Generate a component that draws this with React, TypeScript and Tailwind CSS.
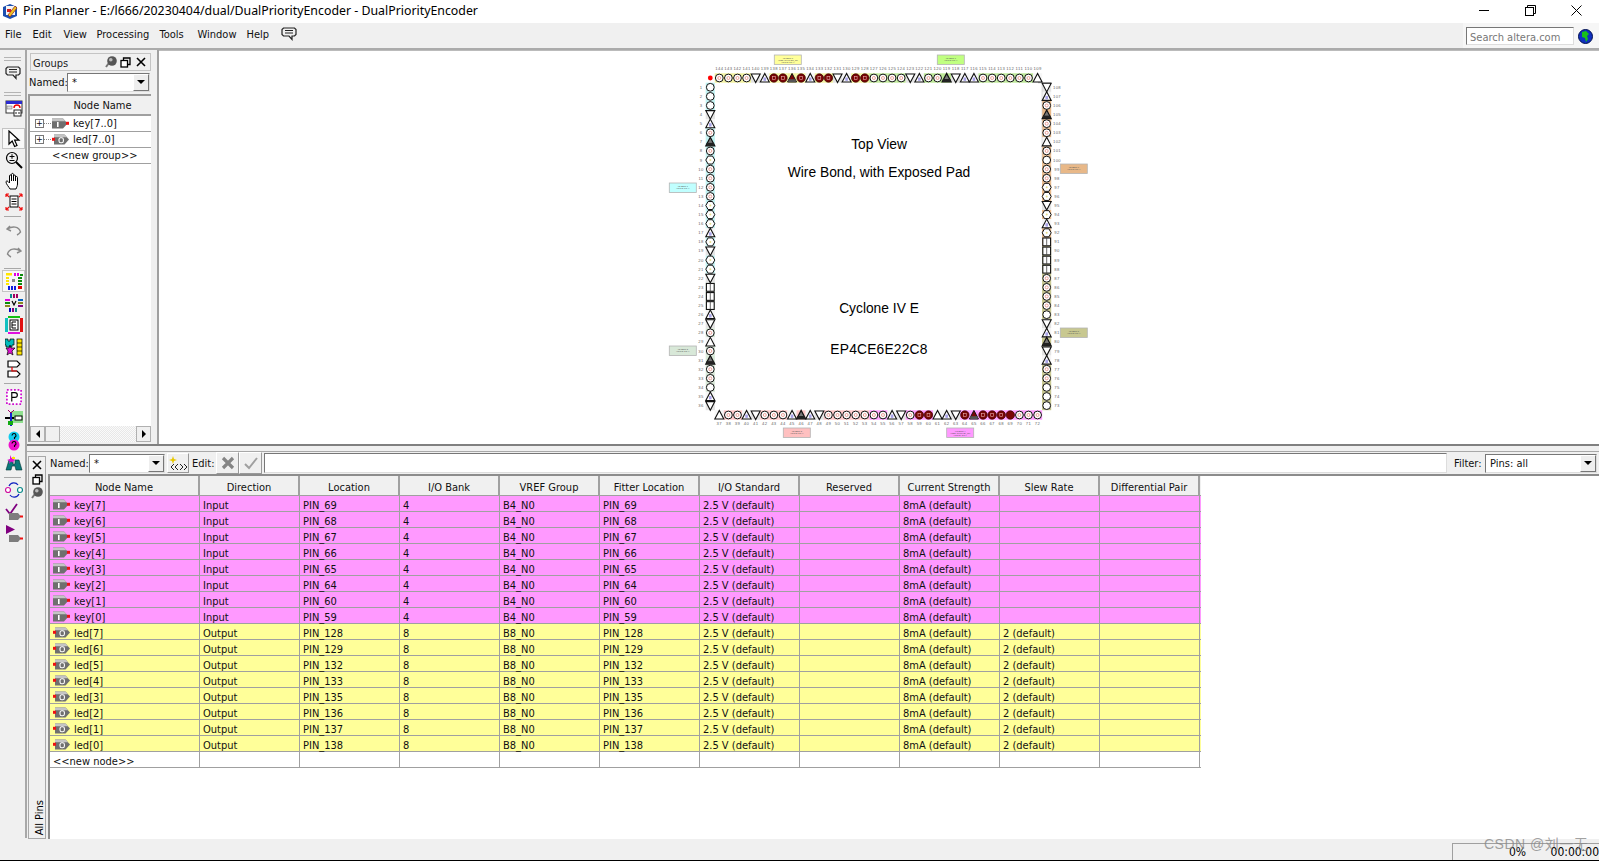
import React from "react";

const uiFont = "font-['DejaVu_Sans_Condensed','DejaVu_Sans',sans-serif] [font-stretch:condensed]";

type Kind = "o" | "c" | "h" | "V" | "A" | "W" | "B" | "d" | "D" | "S" | "e";

const topPins: Kind[] = ["c","c","c","c","V","A","d","d","D","d","A","d","d","V","A","d","d","c","c","c","c","V","A","c","c","B","V","A","A","c","c","c","c","c","c","W"];
const leftPins: Kind[] = ["o","o","o","V","A","c","B","c","h","c","c","c","c","h","h","h","A","h","V","h","h","V","S","S","S","A","V","c","W","c","B","c","c","o","A","V"];
const bottomPins: Kind[] = ["W","c","c","A","V","c","c","c","A","B","A","V","c","c","c","c","c","c","c","A","V","c","d","d","W","A","V","d","D","d","d","d","e","c","c","c"];
const rightPins: Kind[] = ["V","A","c","B","c","c","W","c","o","c","c","h","h","V","h","A","h","S","S","S","S","c","c","c","c","o","V","A","B","V","A","c","c","o","o","o"];

function Pin({ kind, x, y }: { kind: Kind; x: number; y: number }) {
  const s = "#111";
  const up = `${x - 4.5},${y + 4} ${x + 4.5},${y + 4} ${x},${y - 4.6}`;
  const down = `${x - 4.5},${y - 4} ${x + 4.5},${y - 4} ${x},${y + 4.6}`;
  switch (kind) {
    case "o":
      return <circle cx={x} cy={y} r={3.9} fill="#fff" stroke={s} strokeWidth={1} />;
    case "c":
      return (
        <g>
          <circle cx={x} cy={y} r={3.9} fill="#fff" stroke={s} strokeWidth={1} />
          <circle cx={x} cy={y} r={1.5} fill="#fff" stroke="#e58a80" strokeWidth={0.8} />
        </g>
      );
    case "h":
      return (
        <g>
          <polygon points={`${x - 4.5},${y} ${x - 2.2},${y - 4} ${x + 2.2},${y - 4} ${x + 4.5},${y} ${x + 2.2},${y + 4} ${x - 2.2},${y + 4}`} fill="#fff" stroke={s} strokeWidth={1} />
          <circle cx={x} cy={y} r={1} fill="#e6dd88" />
        </g>
      );
    case "V":
      return <polygon points={down} fill="#fff" stroke={s} strokeWidth={1.1} />;
    case "A":
      return (
        <g>
          <polygon points={up} fill="#fff" stroke={s} strokeWidth={1.1} />
          <rect x={x - 1.3} y={y - 0.5} width={2.6} height={3.4} fill="#a9a4e8" />
        </g>
      );
    case "W":
      return <polygon points={up} fill="#fff" stroke={s} strokeWidth={1.1} />;
    case "B":
      return (
        <g>
          <polygon points={up} fill="#777" stroke={s} strokeWidth={1.2} />
          <rect x={x - 3.8} y={y + 1} width={7.6} height={3} fill="#222" />
        </g>
      );
    case "d":
      return (
        <g>
          <circle cx={x} cy={y} r={4.2} fill="#7a0505" stroke="#300" strokeWidth={0.7} />
          <rect x={x - 1.4} y={y - 1.4} width={2.8} height={2.8} fill="#7a0505" stroke="#e8b0b0" strokeWidth={0.6} />
        </g>
      );
    case "D":
      return (
        <g>
          <polygon points={up} fill="#7a0505" stroke={s} strokeWidth={1} />
          <rect x={x - 3.8} y={y + 1.2} width={7.6} height={2.8} fill="#555" />
        </g>
      );
    case "S":
      return (
        <g>
          <rect x={x - 3.9} y={y - 3.9} width={7.8} height={7.8} fill="#fff" stroke={s} strokeWidth={1.1} />
          <line x1={x} y1={y - 3.9} x2={x} y2={y + 3.9} stroke="#444" strokeWidth={0.8} />
        </g>
      );
    default:
      return <circle cx={x} cy={y} r={4.2} fill="#7a0505" stroke="#300" strokeWidth={0.7} />;
  }
}

const STEP = 9.094;

function stripColor(kind: Kind, bank: string) {
  if (kind === "V") return "#e4e4e4";
  if (kind === "A" || kind === "W") return "#f6f6f6";
  return bank;
}

function BankLabel({ x, y, fill, lines }: { x: number; y: number; fill: string; lines: string[] }) {
  return (
    <g>
      <rect x={x} y={y} width={27} height={9.5} fill={fill} stroke="#b4b4b4" strokeWidth={0.8} />
      {lines.map((l, i) => (
        <text key={i} x={x + 13.5} y={y + 3.6 + i * 2.4} fontSize={2.2} fill="#555" textAnchor="middle" fontFamily="Liberation Sans, sans-serif">
          {l}
        </text>
      ))}
    </g>
  );
}

function ChipView() {
  const numStyle = { fontSize: 4.2, fill: "#666", letterSpacing: 0.4, fontFamily: "Liberation Sans, sans-serif" };
  return (
    <svg className="w-[440px] h-[394px] shrink-0" viewBox="659 51 440 394">
      {topPins.map((k, i) => {
        const x = 719.3 + i * STEP;
        return <rect key={i} x={x - 4.6} y={73.3} width={9.2} height={9.4} fill={stripColor(k, i < 17 ? "#f3f3a0" : "#bce896")} />;
      })}
      {bottomPins.map((k, i) => {
        const x = 719.3 + i * STEP;
        return <rect key={i} x={x - 4.6} y={410.3} width={9.2} height={9.4} fill={stripColor(k, i < 17 ? "#ffc8c8" : "#ff99ff")} />;
      })}
      {leftPins.map((k, i) => {
        const y = 87.3 + i * STEP;
        return <rect key={i} x={705.7} y={y - 4.6} width={9.2} height={9.2} fill={stripColor(k, i < 22 ? "#c0f2f2" : "#d8e8d8")} />;
      })}
      {rightPins.map((k, i) => {
        const y = 87.3 + i * STEP;
        return <rect key={i} x={1042} y={y - 4.6} width={9.2} height={9.2} fill={stripColor(k, i < 18 ? "#e8b888" : "#c8c890")} />;
      })}
      <line x1={1038} y1={82.7} x2={1051} y2={82.7} stroke="#999" strokeWidth={0.8} />
      <line x1={1042} y1={83} x2={1042} y2={160} stroke="#ccc" strokeWidth={0.6} />

      {topPins.map((k, i) => {
        const x = 719.3 + i * STEP;
        return (
          <g key={i}>
            <Pin kind={k} x={x} y={78} />
            <text x={x} y={70} textAnchor="middle" style={numStyle}>{144 - i}</text>
          </g>
        );
      })}
      {bottomPins.map((k, i) => {
        const x = 719.3 + i * STEP;
        return (
          <g key={i}>
            <Pin kind={k} x={x} y={415} />
            <text x={x} y={425} textAnchor="middle" style={numStyle}>{37 + i}</text>
          </g>
        );
      })}
      {leftPins.map((k, i) => {
        const y = 87.3 + i * STEP;
        return (
          <g key={i}>
            <Pin kind={k} x={710.3} y={y} />
            <text x={701} y={y + 1.5} textAnchor="middle" style={numStyle}>{1 + i}</text>
          </g>
        );
      })}
      {rightPins.map((k, i) => {
        const y = 87.3 + i * STEP;
        return (
          <g key={i}>
            <Pin kind={k} x={1046.7} y={y} />
            <text x={1057} y={y + 1.5} textAnchor="middle" style={numStyle}>{108 - i}</text>
          </g>
        );
      })}
      <circle cx={710.3} cy={78} r={2.4} fill="#f00" />

      <BankLabel x={774.3} y={55} fill="#ffff99" lines={["I/O Bank 8", "VREF Group B8_N0", "VCCIO: 2.5 V"]} />
      <BankLabel x={937.3} y={55} fill="#c0ff80" lines={["I/O Bank 7", "VCCIO: 2.5 V"]} />
      <BankLabel x={669.3} y={183} fill="#c0ffff" lines={["I/O Bank 1", "VCCIO: 2.5 V"]} />
      <BankLabel x={669.3} y={346} fill="#d8e8d8" lines={["I/O Bank 2", "VCCIO: 2.5 V"]} />
      <BankLabel x={783.3} y={428} fill="#ffc0c0" lines={["I/O Bank 3", "VCCIO: 2.5 V"]} />
      <BankLabel x={946.7} y={428} fill="#ff99ff" lines={["I/O Bank 4", "VREF Group B4_N0", "VCCIO: 2.5 V"]} />
      <BankLabel x={1060.3} y={164} fill="#e8b888" lines={["I/O Bank 6", "VCCIO: 2.5 V"]} />
      <BankLabel x={1060.3} y={328} fill="#c8c890" lines={["I/O Bank 5", "VCCIO: 2.5 V"]} />

      <g fontFamily="Liberation Sans, sans-serif" fontSize={13.8} fill="#000" textAnchor="middle">
        <text x={879} y={149}>Top View</text>
        <text x={879} y={177}>Wire Bond, with Exposed Pad</text>
        <text x={879} y={313}>Cyclone IV E</text>
        <text x={879} y={354} letterSpacing={0.2}>EP4CE6E22C8</text>
      </g>
    </svg>
  );
}

function Bubble() {
  return (
    <svg width="16" height="16" viewBox="0 0 16 16" fill="none" stroke="#222" strokeWidth="1.2">
      <path d="M2.5 2h11l1.5 1.5v5L13.5 10H11v3.5L8 10H2.5L1 8.5v-5z" />
      <path d="M4 4.5h8M4 7h8" />
    </svg>
  );
}

function InputTag() {
  return (
    <svg width="17" height="11" viewBox="0 0 17 11" className="shrink-0 mt-[-3px]">
      <path d="M0 0.500h11l4.500 5-4.500 5H0z" fill="#6f6f6f" />
      <path d="M0 0.500h11l2.500 2.800H0z" fill="#c4c4c4" />
      <rect x="5" y="4" width="1.600" height="5" fill="#fff" />
      <rect x="14" y="3.800" width="3" height="3" fill="#ee1111" />
    </svg>
  );
}

function OutputTag() {
  return (
    <svg width="17" height="11" viewBox="0 0 17 11" className="shrink-0 mt-[-3px]">
      <path d="M2 0.500h10.500l4.500 5-4.500 5H2z" fill="#6f6f6f" />
      <path d="M2 0.500h10.500l2.500 2.800H2z" fill="#c4c4c4" />
      <rect x="7" y="3.800" width="4.400" height="5" rx="1.800" fill="none" stroke="#fff" strokeWidth="1.100" />
      <rect x="0" y="3.800" width="3" height="3" fill="#ee1111" />
    </svg>
  );
}

function PinGlyph() {
  return (
    <svg width="12" height="12" viewBox="0 0 12 12">
      <path d="M3.500 7.500 1 11" stroke="#777" strokeWidth="2" />
      <circle cx="7" cy="5" r="4.800" fill="#555" />
      <circle cx="5.800" cy="3.800" r="1.800" fill="#bbb" />
    </svg>
  );
}

function RestoreGlyph() {
  return (
    <svg width="11" height="11" viewBox="0 0 11 11" fill="none" stroke="#000" strokeWidth="1.3">
      <rect x="1" y="3.5" width="6.5" height="6.5" fill="#fff" />
      <path d="M3.5 3.5V1H10v6.5H7.5" />
    </svg>
  );
}

function CloseGlyph() {
  return (
    <svg width="10" height="10" viewBox="0 0 10 10" stroke="#000" strokeWidth="1.6">
      <path d="M1 1l8 8M9 1l-8 8" />
    </svg>
  );
}

function Combo({ width, text }: { width: string; text: string }) {
  return (
    <div className={`${width} h-[19px] shrink-0 flex items-center bg-white border border-t-[#777] border-l-[#777] border-r-[#ddd] border-b-[#ddd]`}>
      <span className="flex-1 pl-[4px]">{text}</span>
      <div className="w-[16px] h-[17px] bg-[#eeeeee] border border-t-white border-l-white border-r-[#777] border-b-[#777] flex items-center justify-center">
        <div className="w-0 h-0 border-x-[4px] border-x-transparent border-t-[4px] border-t-black" />
      </div>
    </div>
  );
}

const toolIcons: Record<string, React.ReactNode> = {
  assign: (
    <svg width="18" height="18" viewBox="0 0 18 18">
      <rect x="1" y="2" width="16" height="12" fill="#fff" stroke="#333" />
      <rect x="1" y="2" width="16" height="3" fill="#2a2ad0" />
      <rect x="2" y="7" width="5" height="3" fill="#ddd" stroke="#666" strokeWidth="0.5" />
      <path d="M9 9a3 3 0 0 1 6 0" stroke="#e00" strokeWidth="1.4" fill="none" />
      <rect x="9" y="11" width="7" height="6" fill="#fff" stroke="#222" />
      <path d="M11 13v2M14 13v2" stroke="#222" />
    </svg>
  ),
  pointer: (
    <svg width="16" height="18" viewBox="0 0 16 18" fill="#fff" stroke="#000" strokeWidth="1.2">
      <path d="M3 1v13l3.2-3 2.4 5.5 2.4-1-2.4-5.3H13z" />
    </svg>
  ),
  zoom: (
    <svg width="18" height="18" viewBox="0 0 18 18" fill="none" stroke="#000" strokeWidth="1.2">
      <circle cx="7" cy="7" r="5.5" />
      <path d="M4.5 5.5h5M7 3.2v4.6M4.5 9.5h5" strokeWidth="1" />
      <path d="M11 11l6 6" strokeWidth="2" />
    </svg>
  ),
  hand: (
    <svg width="18" height="18" viewBox="0 0 18 18" fill="#fff" stroke="#000" strokeWidth="1">
      <path d="M5 17c-1-2-4-5-4-7 0-1 1-1.500 2-.5l1.500 1.500V4c0-1.500 2-1.500 2 0V2.500c0-1.500 2-1.500 2 0V4c0-1.300 2-1.300 2 0v1.500c0-1.300 2-1.300 2 0V12c0 2-1 3.500-1.500 5z" />
      <path d="M6.500 4v5M8.500 3v6M10.500 4v5" />
    </svg>
  ),
  fit: (
    <svg width="18" height="18" viewBox="0 0 18 18">
      <rect x="5" y="3" width="8" height="11" fill="#fff" stroke="#000" />
      <path d="M6.500 6h5M6.500 8.500h5M6.500 11h5" stroke="#000" />
      <path d="M1 1l3 3M17 1l-3 3M1 17l3-3M17 17l-3-3M1 1h3M1 1v3M17 1h-3M17 1v3M1 17h3M1 17v-3M17 17h-3M17 17v-3" stroke="#e11" strokeWidth="1.2" />
    </svg>
  ),
  undo: (
    <svg width="16" height="14" viewBox="0 0 16 14" fill="none" stroke="#8a8a8a" strokeWidth="1.4">
      <path d="M4 3l-3 3 4 2M1.500 6C6 3 13 3 14.500 9 13 11 12 11.500 11 12" />
    </svg>
  ),
  redo: (
    <svg width="16" height="14" viewBox="0 0 16 14" fill="none" stroke="#8a8a8a" strokeWidth="1.4">
      <path d="M12 3l3 3-4 2M14.500 6C10 3 3 3 1.500 9 3 11 4 11.500 5 12" />
    </svg>
  ),
  planner: (
    <svg width="18" height="18" viewBox="0 0 18 18">
      <rect x="1" y="1" width="6" height="2.500" fill="#ffe600" />
      <rect x="9" y="1" width="2" height="3" fill="#e000e0" />
      <rect x="12" y="1" width="2" height="3" fill="#e000e0" />
      <rect x="15" y="2" width="3" height="2" fill="#0a8a0a" />
      <rect x="1" y="5" width="3" height="2" fill="#ffe600" />
      <rect x="1" y="8" width="3" height="2" fill="#ffe600" />
      <rect x="1" y="11" width="3" height="2" fill="#ffe600" />
      <rect x="7" y="7" width="3" height="3" fill="#888" />
      <rect x="13" y="5" width="4" height="2" fill="#0a8a0a" />
      <rect x="13" y="8" width="4" height="2" fill="#0a8a0a" />
      <rect x="13" y="11" width="4" height="2" fill="#0a8a0a" />
      <rect x="3" y="14" width="2" height="4" fill="#1020e0" />
      <rect x="6" y="14" width="2" height="4" fill="#1020e0" />
      <rect x="9" y="14" width="2" height="4" fill="#1020e0" />
      <rect x="13" y="14" width="4" height="3" fill="#e00000" />
    </svg>
  ),
  view: (
    <svg width="18" height="18" viewBox="0 0 18 18">
      <rect x="5" y="0" width="2" height="4" fill="#0a8a8a" />
      <rect x="8" y="0" width="2" height="4" fill="#a00060" />
      <rect x="11" y="0" width="2" height="4" fill="#a00060" />
      <rect x="0" y="5" width="5" height="2" fill="#e000e0" />
      <rect x="0" y="8" width="5" height="2" fill="#0a8a0a" />
      <rect x="0" y="11" width="5" height="2" fill="#888820" />
      <path d="M7 7l2 4 2-4" stroke="#000" strokeWidth="1.2" fill="none" />
      <rect x="13" y="5" width="5" height="2" fill="#0060c0" />
      <rect x="13" y="8" width="5" height="2" fill="#888820" />
      <rect x="13" y="11" width="5" height="2" fill="#800080" />
      <rect x="4" y="14" width="2" height="4" fill="#0000c0" />
      <rect x="7" y="14" width="2" height="4" fill="#800080" />
      <rect x="10" y="14" width="2" height="4" fill="#0a8a8a" />
    </svg>
  ),
  pkg: (
    <svg width="18" height="18" viewBox="0 0 18 18">
      <rect x="3" y="0" width="12" height="2" fill="#11c011" />
      <rect x="0" y="2" width="3" height="14" fill="#11c0c0" />
      <rect x="15" y="2" width="3" height="14" fill="#e01010" />
      <rect x="3" y="16" width="12" height="2" fill="#e010e0" />
      <rect x="5" y="4" width="8" height="10" fill="#fff" stroke="#000" />
      <path d="M7 6h4M7 9h4M7 12h4M7 6v6" stroke="#000" />
    </svg>
  ),
  puzzle: (
    <svg width="18" height="18" viewBox="0 0 18 18">
      <path d="M0 1h3v2h2V1h4v6H7v2H1V7H0z" fill="#0bb" stroke="#000" strokeWidth="0.7" />
      <path d="M1 10h3l1-3 1 3h4l-3 3 1 4-3-2-3 2 1-4z" fill="#e010d0" stroke="#000" strokeWidth="0.7" />
      <rect x="12" y="1" width="5" height="16" fill="#ffe600" stroke="#000" strokeWidth="0.7" />
      <path d="M12 5h5M12 9h5M12 13h5" stroke="#000" strokeWidth="0.7" />
    </svg>
  ),
  tags: (
    <svg width="16" height="18" viewBox="0 0 16 18" fill="#fff" stroke="#000" strokeWidth="1.2">
      <path d="M2 1h9l3 3-3 3H2z" />
      <path d="M2 11h9l3 3-3 3H2z" />
      <path d="M6 7v4h5" stroke="#e00" fill="none" />
    </svg>
  ),
  pbox: (
    <svg width="16" height="16" viewBox="0 0 18 18">
      <path d="M1 1h16v16H1z" fill="#fff" stroke="#d010d0" strokeWidth="2" strokeDasharray="2 2" />
      <path d="M6.500 14V4h3.500a2.500 2.500 0 0 1 0 5.500H6.500" fill="none" stroke="#000" strokeWidth="1.3" />
    </svg>
  ),
  chipTool: (
    <svg width="18" height="18" viewBox="0 0 18 18">
      <rect x="6" y="1" width="12" height="12" fill="#8fe08f" />
      <rect x="0" y="7" width="9" height="2" fill="#000" />
      <rect x="5" y="2" width="2" height="14" fill="#1020d0" />
      <path d="M3 0l3 3 3-3" stroke="#a00060" fill="none" />
      <rect x="10" y="6" width="7" height="4" fill="#fff" stroke="#000" />
      <rect x="3" y="11" width="5" height="4" fill="#11aa11" />
    </svg>
  ),
  help: (
    <svg width="14" height="20" viewBox="0 0 14 20">
      <circle cx="7" cy="6" r="5.500" fill="#11ccee" />
      <circle cx="7" cy="14" r="5.500" fill="#ee11cc" />
      <path d="M5 4.500a2 2 0 1 1 2.500 2V8M5 12.500a2 2 0 1 1 2.500 2V16" stroke="#000" strokeWidth="1.100" fill="none" />
    </svg>
  ),
  binoc: (
    <svg width="18" height="18" viewBox="0 0 18 18">
      <path d="M4 6h4v4h2V6h4l3 10h-6l-1-4H7l-1 4H1z" fill="#0a7a7a" stroke="#033" strokeWidth="0.6" />
      <path d="M5 1l1.500 3L9 2.500 8 5l3 1-3 1 1 2-3-1.500L4 10l.5-3L2 6l3-1z" fill="#e010d0" />
      <rect x="7" y="3" width="3" height="2" fill="#ffe600" />
    </svg>
  ),
  flow: (
    <svg width="18" height="18" viewBox="0 0 18 18" fill="none">
      <circle cx="3" cy="9" r="2.500" fill="#fff" stroke="#d010a0" strokeWidth="1.200" />
      <circle cx="15" cy="9" r="2.500" fill="#fff" stroke="#0a8a8a" strokeWidth="1.200" />
      <path d="M4 5c2-4 7-4 9-1M14 13c-2 4-7 4-9 1" stroke="#1020c0" strokeWidth="1.200" />
    </svg>
  ),
  check: (
    <svg width="18" height="18" viewBox="0 0 18 18">
      <path d="M1 6l4 5L12 1" stroke="#800080" strokeWidth="1.800" fill="none" />
      <path d="M4 10h9l3 3.500-3 3.500H4z" fill="#7d7d7d" />
      <rect x="15" y="12.500" width="3" height="2" fill="#e11" />
    </svg>
  ),
  play: (
    <svg width="18" height="18" viewBox="0 0 18 18">
      <path d="M1 0l9 4.500L1 9z" fill="#800080" />
      <path d="M4 10h9l3 3.500-3 3.500H4z" fill="#7d7d7d" />
      <rect x="15" y="12.500" width="3" height="2" fill="#e11" />
    </svg>
  ),
};

function ToolBtn({ name, active, short }: { name: string; active?: boolean; short?: boolean }) {
  return (
    <div className={`w-[23px] ${short ? "h-[21px]" : "h-[22px]"} ml-[2px] flex items-center justify-center ${active ? "bg-[#f8f8f8] border border-[#c4c4c4]" : ""}`}>
      {toolIcons[name]}
    </div>
  );
}

function Sep() {
  return <div className="h-px mx-[4px] bg-[#a8a8a8]" />;
}

function Toolbar() {
  return (
    <div className="w-[27px] shrink-0 flex flex-col border-r-2 border-[#a8a8a8] bg-[#f0f0f0]">
      <div className="h-[4px] mx-[4px] mt-[7px] border-y border-[#b4b4b4]" />
      <div className="h-[22px] mt-[1px] flex items-center justify-center"><Bubble /></div>
      <div className="h-[4px] mx-[4px] mt-[8px] border-y border-[#b4b4b4]" />
      <div className="mt-[1px]"><ToolBtn name="assign" /></div>
      <div className="mt-[9px] flex flex-col">
        <ToolBtn name="pointer" active short />
        <ToolBtn name="zoom" short />
        <ToolBtn name="hand" short />
        <ToolBtn name="fit" short />
      </div>
      <div className="mt-[4px]"><Sep /></div>
      <div className="mt-[2px] flex flex-col">
        <ToolBtn name="undo" />
        <ToolBtn name="redo" />
      </div>
      <div className="mt-[5px]"><Sep /></div>
      <div className="mt-[1px] flex flex-col">
        <ToolBtn name="planner" active />
        <ToolBtn name="view" />
        <ToolBtn name="pkg" />
        <ToolBtn name="puzzle" />
        <ToolBtn name="tags" />
      </div>
      <div className="mt-[3px]"><Sep /></div>
      <div className="mt-[2px] flex flex-col">
        <ToolBtn name="pbox" />
        <ToolBtn name="chipTool" />
        <ToolBtn name="help" />
        <ToolBtn name="binoc" />
      </div>
      <div className="mt-[3px]"><Sep /></div>
      <div className="mt-[1px] flex flex-col">
        <ToolBtn name="flow" />
        <ToolBtn name="check" />
        <ToolBtn name="play" />
      </div>
    </div>
  );
}

function GroupsPanel() {
  const rows = [
    { name: "key[7..0]", icon: <InputTag /> },
    { name: "led[7..0]", icon: <OutputTag /> },
  ];
  return (
    <div className="w-[123px] ml-px mb-[2px] shrink-0 flex flex-col">
      <div className="h-[18px] mt-[3px] ml-[2px] flex items-center border border-[#c4c4c4] pl-[2px] pr-[4px] pt-[2px] text-[#222]">
        <span className="flex-1">Groups</span>
        <div className="flex items-center gap-[3px] mt-[-2px]">
          <PinGlyph />
          <RestoreGlyph />
          <span className="ml-[2px] flex"><CloseGlyph /></span>
        </div>
      </div>
      <div className="h-[20px] mt-[1px] flex items-center pl-[1px]">
        <span className="w-[38px]">Named:</span>
        <Combo width="w-[83px]" text="*" />
      </div>
      <div className="flex-1 mt-[2px] flex flex-col min-h-0 border-l-2 border-t-2 border-[#9a9a9a] bg-white">
        <div className="h-[20px] shrink-0 flex items-center justify-center pl-[24px] bg-[#f0f0f0] border-b-2 border-[#a0a0a0]">Node Name</div>
        {rows.map((r) => (
          <div key={r.name} className="h-[16px] shrink-0 flex items-center border-b border-[#a0a0a0] pl-[5px]">
            <div className="w-[9px] h-[9px] bg-white border border-[#777] flex items-center justify-center text-[9px] leading-none">+</div>
            <div className="w-[7px] border-t border-dotted border-[#888] mr-[1px]" />
            <span className="flex pt-[3px]">{r.icon}</span>
            <span className="ml-[4px]">{r.name}</span>
          </div>
        ))}
        <div className="h-[16px] shrink-0 flex items-center border-b border-[#a0a0a0] pl-[22px]">&lt;&lt;new group&gt;&gt;</div>
        <div className="flex-1" />
        <div className="h-[16px] shrink-0 flex bg-[#f0f0f0] bg-[repeating-conic-gradient(#e8e8e8_0_25%,#fafafa_0_50%)] bg-[length:2px_2px]">
          <div className="w-[15px] bg-[#f0f0f0] border border-[#b0b0b0] flex items-center justify-center">
            <div className="w-0 h-0 border-y-[4px] border-y-transparent border-r-[4px] border-r-black" />
          </div>
          <div className="w-[15px] bg-[#f0f0f0] border border-[#b0b0b0]" />
          <div className="flex-1" />
          <div className="w-[15px] bg-[#f0f0f0] border border-[#b0b0b0] flex items-center justify-center">
            <div className="w-0 h-0 border-y-[4px] border-y-transparent border-l-[4px] border-l-black" />
          </div>
        </div>
      </div>
    </div>
  );
}

const columns = ["Direction", "Location", "I/O Bank", "VREF Group", "Fitter Location", "I/O Standard", "Reserved", "Current Strength", "Slew Rate", "Differential Pair"];

const pinRows = [
  ...[69, 68, 67, 66, 65, 64, 60, 59].map((p, i) => ({ node: `key[${7 - i}]`, out: false, pin: p })),
  ...[128, 129, 132, 133, 135, 136, 137, 138].map((p, i) => ({ node: `led[${7 - i}]`, out: true, pin: p })),
];

function Cell({ children, first }: { children?: React.ReactNode; first?: boolean }) {
  return (
    <div className={`${first ? "w-[150px] pl-[3px]" : "w-[100px] pl-[3px]"} shrink-0 h-full flex items-center pt-[4px] border-r border-[#a0a0a0]`}>
      {children}
    </div>
  );
}

function PinTable() {
  return (
    <div className="flex-1 min-h-0 bg-white border-l-2 border-t-2 border-[#8c8c8c]">
      <div className="w-[1151px]">
        <div className="h-[20px] flex bg-[#f0f0f0] border-b border-[#a0a0a0]">
          <div className="w-[150px] shrink-0 flex items-center justify-center pt-[4px] border-r-2 border-[#a0a0a0]">Node Name</div>
          {columns.map((c) => (
            <div key={c} className="w-[100px] shrink-0 flex items-center justify-center pt-[4px] border-r-2 border-[#a0a0a0]">{c}</div>
          ))}
        </div>
        {pinRows.map((r) => (
          <div key={r.node} className={`h-[16px] flex border-b border-[#a0a0a0] ${r.out ? "bg-[#ffff99]" : "bg-[#ff99ff]"}`}>
            <Cell first>
              {r.out ? <OutputTag /> : <InputTag />}
              <span className="ml-[4px]">{r.node}</span>
            </Cell>
            <Cell>{r.out ? "Output" : "Input"}</Cell>
            <Cell>PIN_{r.pin}</Cell>
            <Cell>{r.out ? "8" : "4"}</Cell>
            <Cell>{r.out ? "B8_N0" : "B4_N0"}</Cell>
            <Cell>PIN_{r.pin}</Cell>
            <Cell>2.5 V (default)</Cell>
            <Cell />
            <Cell>8mA (default)</Cell>
            <Cell>{r.out ? "2 (default)" : ""}</Cell>
            <Cell />
          </div>
        ))}
        <div className="h-[16px] flex border-b border-[#a0a0a0]">
          <Cell first>&lt;&lt;new node&gt;&gt;</Cell>
          {columns.map((c) => (
            <Cell key={c} />
          ))}
        </div>
      </div>
    </div>
  );
}

function BottomPanel() {
  return (
    <div className="h-[388px] shrink-0 flex border-t border-[#a8a8a8] mt-[5px] mb-[2px]">
      <div className="w-[18px] ml-px mt-[4px] shrink-0 flex flex-col items-center border border-[#a8a8a8]">
        <div className="mt-[3px]"><CloseGlyph /></div>
        <div className="mt-[4px] flex"><RestoreGlyph /></div>
        <div className="mt-[2px] flex"><PinGlyph /></div>
        <div className="flex-1" />
        <div className="mb-[3px] ml-[4px] [writing-mode:vertical-rl] rotate-180 text-black">All Pins</div>
      </div>
      <div className="flex-1 min-w-0 ml-[2px] flex flex-col">
        <div className="h-[22px] shrink-0 flex items-center">
          <span className="w-[41px] shrink-0 pl-[2px]">Named:</span>
          <Combo width="w-[76px]" text="*" />
          <div className="w-[22px] h-[20px] ml-[2px] shrink-0 bg-[#f0f0f0] border border-t-white border-l-white border-r-[#999] border-b-[#999] flex items-center justify-center">
            <svg width="18" height="14" viewBox="0 0 18 14">
              <path d="M4 0l1 3 3 1-3 1-1 3-1-3-3-1 3-1z" fill="#e8c800" />
              <path d="M5 8l-3 3 3 3M9 8l-3 3 3 3M11 8l3 3-3 3M15 8l3 3-3 3" fill="none" stroke="#222" />
            </svg>
          </div>
          <span className="ml-[3px] w-[24px] shrink-0">Edit:</span>
          <div className="w-[23px] h-[22px] shrink-0 bg-[#f0f0f0] border border-t-white border-l-white border-r-[#999] border-b-[#999] flex items-center justify-center">
            <svg width="14" height="14" viewBox="0 0 14 14" stroke="#858585" strokeWidth="3.2"><path d="M2 2l10 10M12 2L2 12" /></svg>
          </div>
          <div className="w-[23px] h-[22px] shrink-0 bg-[#f0f0f0] border border-t-white border-l-white border-r-[#999] border-b-[#999] flex items-center justify-center">
            <svg width="14" height="14" viewBox="0 0 14 14" stroke="#a0a0a0" strokeWidth="2" fill="none"><path d="M1 8l4 4 8-10" /></svg>
          </div>
          <div className="h-[20px] flex-1 ml-[2px] bg-white border border-t-[#777] border-l-[#777] border-r-[#ddd] border-b-[#ddd]" />
          <span className="w-[31px] ml-[7px] shrink-0">Filter:</span>
          <Combo width="w-[112px]" text="Pins: all" />
          <div className="w-[2px] shrink-0" />
        </div>
        <PinTable />
      </div>
    </div>
  );
}

export default function App() {
  const menu = [
    { label: "File", w: "w-[27.5px]" },
    { label: "Edit", w: "w-[31px]" },
    { label: "View", w: "w-[33px]" },
    { label: "Processing", w: "w-[63px]" },
    { label: "Tools", w: "w-[38px]" },
    { label: "Window", w: "w-[49px]" },
    { label: "Help", w: "w-[35px]" },
  ];
  return (
    <div className={`w-[1599px] h-[861px] overflow-hidden relative flex flex-col bg-[#f0f0f0] text-[11px] leading-none text-[#111] ${uiFont}`}>
      <div className="h-[23px] shrink-0 bg-white flex items-center pl-[2px]">
        <svg width="17" height="17" viewBox="0 0 17 17" className="shrink-0">
          <path d="M1 4l7-3 7 3v9l-7 3-7-3z" fill="#1c4fb0" />
          <path d="M4 3h9v9H4z" fill="#f5f5f5" />
          <path d="M6 12l7-9 2 2-7 9z" fill="#f0c020" stroke="#822" strokeWidth="0.7" />
          <path d="M5 6h4v3H5z" fill="#d02020" />
        </svg>
        <span className="ml-[4px] flex-1 font-['Noto_Sans',sans-serif] [font-stretch:normal] text-[12.35px] text-black">
          Pin Planner - E:/l666/20230404/dual/DualPriorityEncoder - DualPriorityEncoder
        </span>
        <div className="flex items-center pb-[2px]">
          <div className="w-[46px] flex justify-center"><div className="w-[10px] h-px bg-black" /></div>
          <div className="w-[46px] flex justify-center">
            <svg width="11" height="11" viewBox="0 0 11 11" fill="none" stroke="#000"><rect x="0.500" y="2.500" width="8" height="8" /><path d="M2.500 2.500V0.500h8v8H8.500" /></svg>
          </div>
          <div className="w-[46px] flex justify-center">
            <svg width="11" height="11" viewBox="0 0 11 11" stroke="#000"><path d="M0.500 0.500l10 10M10.500 0.500l-10 10" /></svg>
          </div>
        </div>
      </div>

      <div className="h-[25px] shrink-0 flex items-center pl-[5px] pb-[3px]">
        {menu.map((m) => (
          <span key={m.label} className={`${m.w} shrink-0`}>{m.label}</span>
        ))}
        <div className="ml-[-1px] flex"><Bubble /></div>
        <div className="flex-1" />
        <div className="w-[136px] h-[25px] mb-[-3px] shrink-0 flex items-center bg-[#f6f6f6] pl-[3px]">
          <div className="w-[108px] h-[18px] mt-[1px] bg-white border border-t-[#777] border-l-[#777] border-r-[#ddd] border-b-[#ddd] flex items-center pl-[3px] pt-[2px] text-[#777]">Search altera.com</div>
          <svg width="15" height="15" viewBox="0 0 15 15" className="ml-[4px] mt-[1px]">
            <circle cx="7.500" cy="7.500" r="7" fill="#1030c0" stroke="#001050" />
            <path d="M4 3l4-1 3 3-2 2 1 3-2 3-1-4-3-1z" fill="#18c018" />
          </svg>
        </div>
      </div>

      <div className="h-[790px] shrink-0 flex border-t-2 border-[#ababab]">
        <Toolbar />
        <div className="flex-1 min-w-0 flex flex-col">
          <div className="h-[394px] shrink-0 flex">
            <GroupsPanel />
            <div className="w-[6px] shrink-0" />
            <div className="w-[2px] shrink-0 bg-[#a0a0a0]" />
            <div className="flex-1 min-w-0 bg-white flex justify-center border-t border-[#bbb]">
              <ChipView />
            </div>
          </div>
          <div className="h-[2px] shrink-0 bg-[#808080]" />
          <BottomPanel />
        </div>
      </div>

      <div className="flex-1 flex justify-end items-end">
        <div className="w-[56px] h-[17px] border-t border-l border-[#a0a0a0]" />
        <div className="w-[91px] h-[17px] border-t border-[#a0a0a0] flex items-center text-black text-[12px]">
          <span className="w-[46px] pl-[1px]">0%</span>
          <span>00:00:00</span>
        </div>
      </div>
      <div className="h-[1px] shrink-0 bg-black" />

      <span className="absolute left-[1484px] top-[836px] text-[14px] leading-[16px] text-[#888]/80 font-['Liberation_Sans','Noto_Sans_CJK_SC',sans-serif] [font-stretch:normal] tracking-[0.5px]">
        CSDN @刘一无
      </span>
    </div>
  );
}
